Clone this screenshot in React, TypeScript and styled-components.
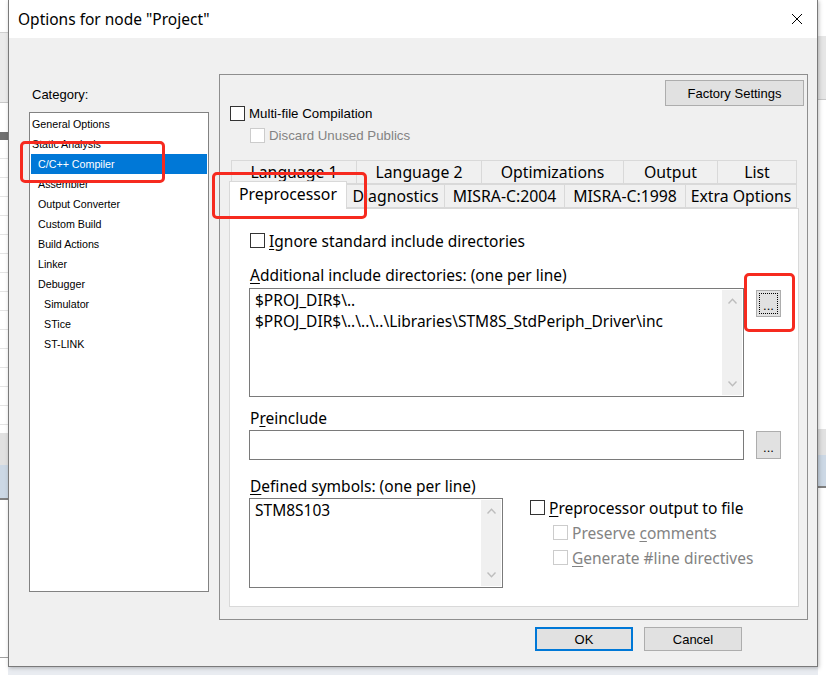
import React from 'react';
import styled, { createGlobalStyle } from 'styled-components';

const UI = `"Noto Sans", "Noto Sans CJK SC", sans-serif`;
const CLASSIC = `"Liberation Sans", Arial, sans-serif`;

const GlobalStyle = createGlobalStyle`
  html, body {
    margin: 0;
    padding: 0;
  }
  body {
    width: 826px;
    height: 675px;
    overflow: hidden;
    font-family: ${UI};
  }
  * {
    box-sizing: border-box;
  }
`;

const CATEGORIES: { label: string; level: number }[] = [
  { label: 'General Options', level: 0 },
  { label: 'Static Analysis', level: 0 },
  { label: 'C/C++ Compiler', level: 1 },
  { label: 'Assembler', level: 1 },
  { label: 'Output Converter', level: 1 },
  { label: 'Custom Build', level: 1 },
  { label: 'Build Actions', level: 1 },
  { label: 'Linker', level: 1 },
  { label: 'Debugger', level: 1 },
  { label: 'Simulator', level: 2 },
  { label: 'STice', level: 2 },
  { label: 'ST-LINK', level: 2 },
];

const BACK_TABS = [
  { label: 'Language 1', width: 126 },
  { label: 'Language 2', width: 126 },
  { label: 'Optimizations', width: 143 },
  { label: 'Output', width: 95 },
  { label: 'List', width: 80 },
];

const FRONT_TABS = [
  { label: 'Preprocessor', width: 118, active: true },
  { label: 'Diagnostics', width: 99 },
  { label: 'MISRA-C:2004', width: 121 },
  { label: 'MISRA-C:1998', width: 122 },
  { label: 'Extra Options', width: 112 },
];

// the application window behind the dialog shows at the edges
const Desktop = styled.div`
  position: relative;
  width: 826px;
  height: 675px;
  overflow: hidden;
  background:
    repeating-linear-gradient(to bottom, transparent 0 18px, #e4e4e4 18px 19px) 0 140px / 8px 293px no-repeat,
    linear-gradient(
        to bottom,
        #fff 0 32px,
        #d0d0d0 32px 33px,
        #ebebeb 33px 102px,
        #c8c8c8 102px 103px,
        #fff 103px 132px,
        #707070 132px 140px,
        #fff 140px 433px,
        #e1e1e1 433px 465px,
        #ccd8e5 465px 498px,
        #808080 498px 500px,
        #fff 500px 657px,
        #a0a0a0 657px 658px,
        #fff 658px
      )
      0 0 / 8px 675px no-repeat,
    linear-gradient(
        to bottom,
        #fff 0 36px,
        #e6e6e6 36px 99px,
        #c8c8c8 99px 100px,
        #fff 100px 429px,
        #e1e1e1 429px 455px,
        #ccd8e5 455px 486px,
        #808080 486px 488px,
        #fff 488px
      )
      818px 0 / 8px 675px no-repeat,
    #e9ecf1;
`;

const Dialog = styled.div`
  margin-left: 8px;
  width: 810px;
  height: 667px;
  background: #f0f0f0;
  border: 1px solid #7a7a7a;
  border-top: none;
  box-shadow: 1px 1px 4px rgba(0, 0, 0, 0.25);
  display: flex;
  flex-direction: column;
`;

const TitleBar = styled.div`
  height: 38px;
  flex: none;
  background: #fff;
  display: flex;
  align-items: center;
  justify-content: space-between;
  padding: 0 14px 0 9px;
`;

const Title = styled.span`
  font-family: ${UI};
  font-size: 15.5px;
  color: #000;
`;

const CloseIcon = styled.svg`
  width: 12px;
  height: 12px;
  display: block;
`;

const Body = styled.div`
  flex: 1;
  display: flex;
  flex-direction: column;
  padding: 36px 8px 0 20px;
`;

const MainRow = styled.div`
  display: flex;
  gap: 10px;
  align-items: flex-start;
`;

const LeftColumn = styled.div`
  width: 180px;
  display: flex;
  flex-direction: column;
`;

const CategoryLabel = styled.div`
  font-family: ${CLASSIC};
  font-size: 13px;
  line-height: 16px;
  color: #000;
  margin: 13px 0 9px 3px;
`;

const ListBox = styled.div`
  height: 480px;
  background: #fff;
  border: 1px solid #828282;
  padding: 1px;
`;

const ListItem = styled.div<{ $level: number; $selected?: boolean }>`
  height: 20px;
  line-height: 20px;
  font-family: ${CLASSIC};
  font-size: 10.7px;
  white-space: nowrap;
  padding-left: ${({ $level }) => [1, 7, 13][$level]}px;
  background: ${({ $selected }) => ($selected ? '#0078d7' : 'transparent')};
  color: ${({ $selected }) => ($selected ? '#fff' : '#000')};
`;

const GroupBox = styled.div`
  width: 589px;
  height: 546px;
  border: 1px solid #8e8e8e;
  padding: 5px 3px 0 9px;
  display: flex;
  flex-direction: column;
`;

const PushButton = styled.div<{ $width: number; $height: number; $default?: boolean }>`
  width: ${({ $width }) => $width}px;
  height: ${({ $height }) => $height}px;
  flex: none;
  background: #e1e1e1;
  border: ${({ $default }) => ($default ? '2px solid #0078d7' : '1px solid #adadad')};
  font-family: ${CLASSIC};
  font-size: 13px;
  color: #000;
  display: flex;
  align-items: center;
  justify-content: center;
`;

const FactoryButton = styled(PushButton)`
  align-self: flex-end;
`;

const BrowseButton = styled(PushButton)<{ $focused?: boolean; $top: number }>`
  position: relative;
  margin-top: ${({ $top }) => $top}px;
  align-items: flex-end;
  padding-bottom: 5px;
  line-height: 10px;
  &::after {
    content: '';
    display: ${({ $focused }) => ($focused ? 'block' : 'none')};
    position: absolute;
    inset: 2px;
    border: 1px dotted #000;
  }
`;

const CheckRow = styled.div<{ $indent?: number; $top?: number }>`
  display: flex;
  align-items: center;
  gap: 4px;
  height: 15px;
  margin-left: ${({ $indent }) => $indent ?? 0}px;
  margin-top: ${({ $top }) => $top ?? 0}px;
`;

const CheckBox = styled.span<{ $disabled?: boolean }>`
  width: 15px;
  height: 15px;
  flex: none;
  background: #fff;
  border: 1px solid ${({ $disabled }) => ($disabled ? '#cccccc' : '#333333')};
`;

const CheckText = styled.span<{ $disabled?: boolean; $small?: boolean }>`
  font-family: ${({ $small }) => ($small ? CLASSIC : UI)};
  font-size: ${({ $small }) => ($small ? 13.3 : 15.5)}px;
  line-height: 18px;
  white-space: nowrap;
  color: ${({ $disabled }) => ($disabled ? '#838383' : '#000')};
`;

const Key = styled.span`
  text-decoration: underline;
  text-underline-offset: 2px;
`;

const TabArea = styled.div`
  margin-top: 17px;
  display: flex;
  flex-direction: column;
`;

const TabRow = styled.div<{ $offset: number }>`
  display: flex;
  height: 24px;
  padding-left: ${({ $offset }) => $offset}px;
  align-items: flex-end;
`;

const Tab = styled.div<{ $width: number; $active?: boolean }>`
  position: relative;
  width: ${({ $width }) => $width}px;
  height: ${({ $active }) => ($active ? 28 : 24)}px;
  margin-bottom: ${({ $active }) => ($active ? -1 : 0)}px;
  margin-right: -1px;
  z-index: ${({ $active }) => ($active ? 1 : 0)};
  background: ${({ $active }) => ($active ? '#fff' : '#f0f0f0')};
  border: 1px solid #d9d9d9;
  border-bottom: ${({ $active }) => ($active ? 'none' : '1px solid #d9d9d9')};
  font-family: ${UI};
  font-size: 15.8px;
  color: #000;
  display: flex;
  align-items: center;
  justify-content: center;
  padding-bottom: ${({ $active }) => ($active ? 3 : 0)}px;
  white-space: nowrap;
`;

const TabPage = styled.div`
  width: 570px;
  height: 399px;
  background: #fff;
  border: 1px solid #d9d9d9;
  padding: 24px 0 0 19px;
  display: flex;
  flex-direction: column;
`;

const FieldLabel = styled.div<{ $top: number }>`
  font-family: ${UI};
  font-size: 15.5px;
  line-height: 18px;
  color: #000;
  margin: ${({ $top }) => $top}px 0 0 1px;
  white-space: nowrap;
`;

const EditRow = styled.div<{ $top: number }>`
  display: flex;
  gap: 12px;
  align-items: flex-start;
  margin-top: ${({ $top }) => $top}px;
`;

const EditBox = styled.div<{ $width: number; $height: number }>`
  width: ${({ $width }) => $width}px;
  height: ${({ $height }) => $height}px;
  flex: none;
  background: #fff;
  border: 1px solid #7a7a7a;
  display: flex;
`;

const EditText = styled.div`
  flex: 1;
  padding: 1px 5px;
  font-family: ${UI};
  font-size: 15.5px;
  line-height: 21px;
  color: #000;
  white-space: pre;
  overflow: hidden;
`;

const ScrollBar = styled.div`
  width: 20px;
  flex: none;
  margin: 1px 1px 1px 0;
  background: #f0f0f0;
  display: flex;
  flex-direction: column;
  justify-content: space-between;
  align-items: center;
  padding: 8px 0;
`;

const Chevron = styled.svg`
  width: 9px;
  height: 6px;
  display: block;
`;

const BottomRow = styled.div`
  display: flex;
  margin-top: 3px;
`;

const OutputOptions = styled.div`
  margin-left: 27px;
  padding-top: 2px;
  display: flex;
  flex-direction: column;
`;

const ButtonBar = styled.div`
  display: flex;
  justify-content: flex-end;
  gap: 11px;
  margin-top: 7px;
  padding-right: 67px;
`;

const Annotation = styled.div<{ $x: number; $y: number; $w: number; $h: number }>`
  position: absolute;
  left: ${({ $x }) => $x}px;
  top: ${({ $y }) => $y}px;
  width: ${({ $w }) => $w}px;
  height: ${({ $h }) => $h}px;
  border: 3px solid #f62a1f;
  border-radius: 5px;
  pointer-events: none;
`;

const ScrollArrows: React.FC = () => (
  <ScrollBar>
    <Chevron viewBox="0 0 9 6">
      <polyline points="0.5,5.5 4.5,1.2 8.5,5.5" fill="none" stroke="#bdbdbd" strokeWidth="1.4" />
    </Chevron>
    <Chevron viewBox="0 0 9 6">
      <polyline points="0.5,0.5 4.5,4.8 8.5,0.5" fill="none" stroke="#bdbdbd" strokeWidth="1.4" />
    </Chevron>
  </ScrollBar>
);

const Check: React.FC<{
  indent?: number;
  top?: number;
  disabled?: boolean;
  small?: boolean;
  children: React.ReactNode;
}> = ({ indent, top, disabled, small, children }) => (
  <CheckRow $indent={indent} $top={top}>
    <CheckBox $disabled={disabled} />
    <CheckText $disabled={disabled} $small={small}>
      {children}
    </CheckText>
  </CheckRow>
);

export default function App() {
  return (
    <Desktop>
      <GlobalStyle />
      <Dialog>
        <TitleBar>
          <Title>Options for node "Project"</Title>
          <CloseIcon viewBox="0 0 12 12">
            <path d="M1 1 L11 11 M11 1 L1 11" stroke="#000" strokeWidth="1" fill="none" />
          </CloseIcon>
        </TitleBar>
        <Body>
          <MainRow>
            <LeftColumn>
              <CategoryLabel>Category:</CategoryLabel>
              <ListBox>
                {CATEGORIES.map((c) => (
                  <ListItem key={c.label} $level={c.level} $selected={c.label === 'C/C++ Compiler'}>
                    {c.label}
                  </ListItem>
                ))}
              </ListBox>
            </LeftColumn>
            <GroupBox>
              <FactoryButton $width={139} $height={26}>
                Factory Settings
              </FactoryButton>
              <Check indent={1} small>
                Multi-file Compilation
              </Check>
              <Check indent={21} top={7} disabled small>
                Discard Unused Publics
              </Check>
              <TabArea>
                <TabRow $offset={2}>
                  {BACK_TABS.map((t) => (
                    <Tab key={t.label} $width={t.width}>
                      {t.label}
                    </Tab>
                  ))}
                </TabRow>
                <TabRow $offset={0}>
                  {FRONT_TABS.map((t) => (
                    <Tab key={t.label} $width={t.width} $active={t.active}>
                      {t.label}
                    </Tab>
                  ))}
                </TabRow>
                <TabPage>
                  <Check indent={1}>
                    <Key>I</Key>gnore standard include directories
                  </Check>
                  <FieldLabel $top={18}>
                    <Key>A</Key>dditional include directories: (one per line)
                  </FieldLabel>
                  <EditRow $top={4}>
                    <EditBox $width={495} $height={109}>
                      <EditText>
                        {'$PROJ_DIR$\\..\n$PROJ_DIR$\\..\\..\\..\\Libraries\\STM8S_StdPeriph_Driver\\inc'}
                      </EditText>
                      <ScrollArrows />
                    </EditBox>
                    <BrowseButton $width={25} $height={27} $top={2} $focused>
                      ...
                    </BrowseButton>
                  </EditRow>
                  <FieldLabel $top={12}>
                    P<Key>r</Key>einclude
                  </FieldLabel>
                  <EditRow $top={3}>
                    <EditBox $width={495} $height={30} />
                    <BrowseButton $width={25} $height={28} $top={1}>
                      ...
                    </BrowseButton>
                  </EditRow>
                  <FieldLabel $top={17}>
                    <Key>D</Key>efined symbols: (one per line)
                  </FieldLabel>
                  <BottomRow>
                    <EditBox $width={254} $height={90}>
                      <EditText>STM8S103</EditText>
                      <ScrollArrows />
                    </EditBox>
                    <OutputOptions>
                      <Check>
                        <Key>P</Key>reprocessor output to file
                      </Check>
                      <Check indent={23} top={10} disabled>
                        Preserve <Key>c</Key>omments
                      </Check>
                      <Check indent={23} top={10} disabled>
                        <Key>G</Key>enerate #line directives
                      </Check>
                    </OutputOptions>
                  </BottomRow>
                </TabPage>
              </TabArea>
            </GroupBox>
          </MainRow>
          <ButtonBar>
            <PushButton $width={98} $height={24} $default>
              OK
            </PushButton>
            <PushButton $width={98} $height={24}>
              Cancel
            </PushButton>
          </ButtonBar>
        </Body>
      </Dialog>
      <Annotation $x={20} $y={141} $w={145} $h={42} />
      <Annotation $x={212} $y={172} $w={155} $h={47} />
      <Annotation $x={744} $y={273} $w={51} $h={59} />
    </Desktop>
  );
}
